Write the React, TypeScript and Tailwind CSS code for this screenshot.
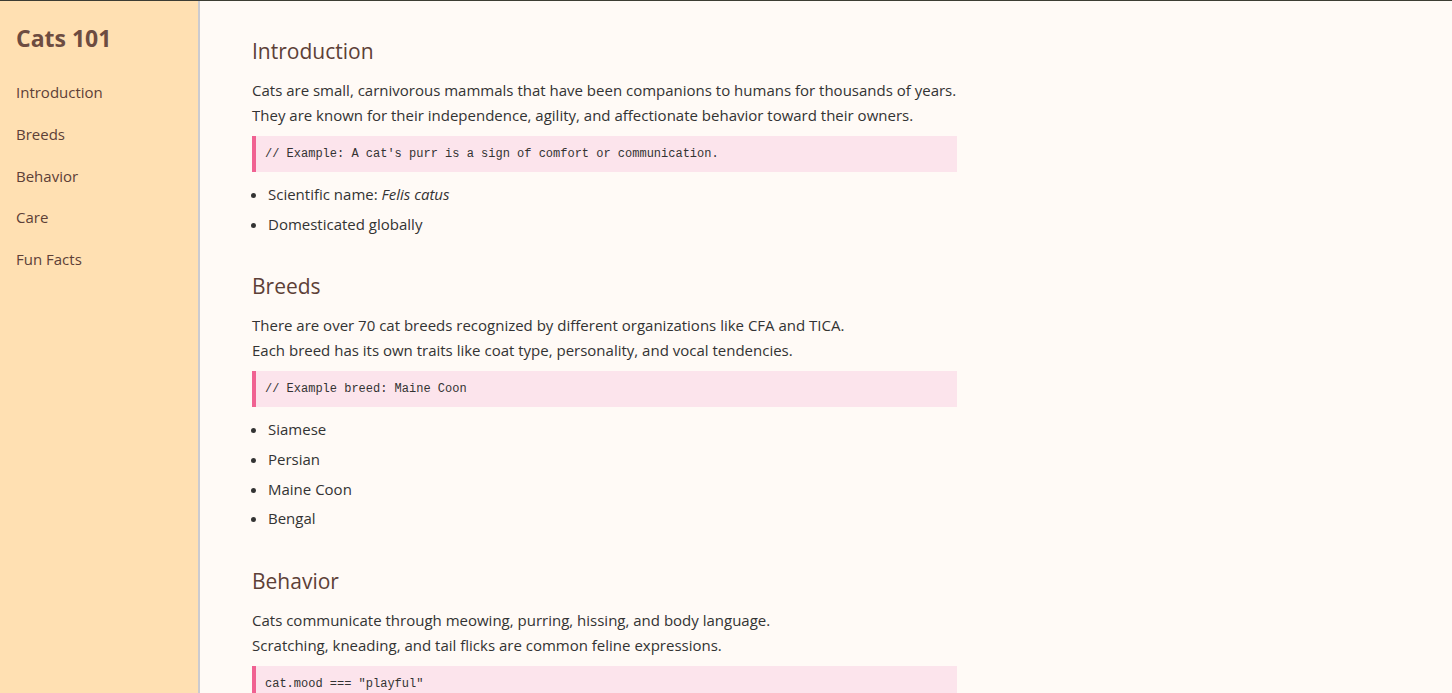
import React from "react";

const navItems = ["Introduction", "Breeds", "Behavior", "Care", "Fun Facts"];

function CodeBlock({ children }: { children: React.ReactNode }) {
  return (
    <div className="mt-[8px] h-[36px] flex items-center border-l-4 border-[#f06292] bg-[#fce4ec] pl-[9px] font-['Liberation_Mono',monospace] text-[12px] text-[#333333]">
      {children}
    </div>
  );
}

function Section({
  title,
  lines,
  code,
  items,
}: {
  title: string;
  lines: string[];
  code: string;
  items: React.ReactNode[];
}) {
  return (
    <section className="mb-[36.5px]">
      <h2 className="text-[21px] leading-[26px] text-[#5d4037]">{title}</h2>
      <p className="mt-[14px] text-[15px] leading-[25px]">
        {lines[0]}
        <br />
        {lines[1]}
      </p>
      <CodeBlock>{code}</CodeBlock>
      <ul className="mt-[10px] list-disc pl-[16px] text-[15px] leading-[25px]">
        {items.map((item, i) => (
          <li key={i} className="mb-[4.7px]">
            {item}
          </li>
        ))}
      </ul>
    </section>
  );
}

export default function App() {
  return (
    <div className="flex h-screen overflow-hidden border-t border-[#3d3d33] font-['Open_Sans',sans-serif] text-[#333333]">
      <aside className="w-[200px] shrink-0 border-r-2 border-[#cbcbd0] bg-[#ffe0b2] px-4 pt-[22px]">
        <h1 className="text-[23px] font-bold leading-[30px] text-[#6d4c41]">Cats 101</h1>
        <nav className="mt-[28px] flex flex-col">
          {navItems.map((item) => (
            <a key={item} href="#" className="h-[41.75px] text-[15px] leading-[22px] text-[#5d4037]">
              {item}
            </a>
          ))}
        </nav>
      </aside>
      <main className="flex-1 bg-[#fffaf6] pl-[52px] pt-[37px]">
        <div className="w-[705px]">
          <Section
            title="Introduction"
            lines={[
              "Cats are small, carnivorous mammals that have been companions to humans for thousands of years.",
              "They are known for their independence, agility, and affectionate behavior toward their owners.",
            ]}
            code="// Example: A cat's purr is a sign of comfort or communication."
            items={[
              <>
                Scientific name: <em>Felis catus</em>
              </>,
              "Domesticated globally",
            ]}
          />
          <Section
            title="Breeds"
            lines={[
              "There are over 70 cat breeds recognized by different organizations like CFA and TICA.",
              "Each breed has its own traits like coat type, personality, and vocal tendencies.",
            ]}
            code="// Example breed: Maine Coon"
            items={["Siamese", "Persian", "Maine Coon", "Bengal"]}
          />
          <Section
            title="Behavior"
            lines={[
              "Cats communicate through meowing, purring, hissing, and body language.",
              "Scratching, kneading, and tail flicks are common feline expressions.",
            ]}
            code='cat.mood === "playful"'
            items={["Independent but social", "Playful and curious"]}
          />
        </div>
      </main>
    </div>
  );
}
